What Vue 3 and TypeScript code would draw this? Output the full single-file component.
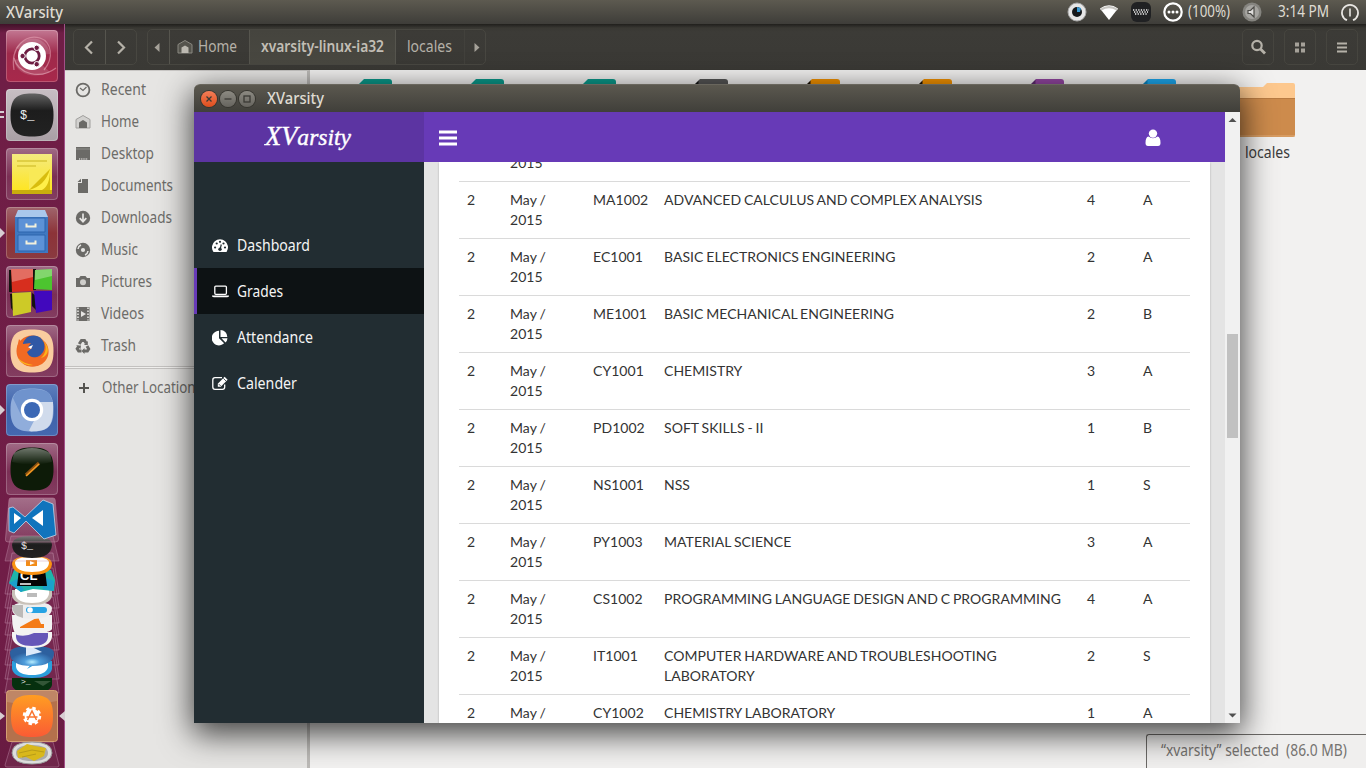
<script setup lang="ts">
import { h } from 'vue'

interface LabelProps { text: string; w: number; size?: number; h?: number; base?: number }

// Single-line label drawn at an exact advance width.
const FitLabel = (p: LabelProps) =>
  h('svg', { width: p.w, height: p.h ?? 20, class: 'fit' }, [
    h('text', { x: 0, y: p.base ?? 15, 'font-size': p.size ?? 15.5, textLength: p.w, lengthAdjust: 'spacingAndGlyphs' }, p.text),
  ])
FitLabel.props = ['text', 'w', 'size', 'h', 'base']

interface Place { label: string; w: number; icon: string }
const places: Place[] = [
  { label: 'Recent', w: 45, icon: '<circle cx="8" cy="8" r="6.4" fill="none" stroke="#6b6a67" stroke-width="1.8"/><path d="M5 6l3 2.5L11.500 5" fill="none" stroke="#6b6a67" stroke-width="1.200"/>' },
  { label: 'Home', w: 38, icon: '<path d="M1 14V5.500L8 1.500l7 4V14z" fill="#d2d1cf" stroke="#a09f9d"/><path d="M4 14V8.500L8 6l4 2.500V14z" fill="#6b6a67"/>' },
  { label: 'Desktop', w: 53, icon: '<path d="M1 1h14v13H1z" fill="#6b6a67"/><path d="M1 3h14" stroke="#8f8e8b"/><path d="M4 13h9" stroke="#d0cfcd" stroke-width="1.500" stroke-dasharray="1.200 1"/>' },
  { label: 'Documents', w: 72, icon: '<path d="M7 1h6v14H3V5h4z" fill="#6b6a67"/><path d="M2.500 4L6 .8V4z" fill="#6b6a67"/>' },
  { label: 'Downloads', w: 71, icon: '<circle cx="8" cy="8" r="7.200" fill="#6b6a67"/><path d="M8 3.500v8M4.700 8.200L8 11.700l3.300-3.500" fill="none" stroke="#e6e5e3" stroke-width="1.700"/>' },
  { label: 'Music', w: 37, icon: '<circle cx="8" cy="8" r="7.200" fill="#6b6a67"/><circle cx="8" cy="8" r="2.100" fill="#e6e5e3"/><path d="M3 7a5 5 0 0 1 3-4M13 9a5 5 0 0 1-3 4" fill="none" stroke="#e6e5e3" stroke-width="1.500"/>' },
  { label: 'Pictures', w: 51, icon: '<path d="M1 4h3l1.500-2h5L12 4h3v9H1z" fill="#6b6a67"/><circle cx="8" cy="8.300" r="3" fill="#cfcecb"/>' },
  { label: 'Videos', w: 43, icon: '<path d="M1.500 1h13v14h-13z" fill="#6b6a67"/><path d="M3 1.500v13M13 1.500v13" stroke="#e6e5e3" stroke-width="1.600" stroke-dasharray="1.500 1.500"/><path d="M6 5l5 3-5 3z" fill="#e6e5e3"/>' },
  { label: 'Trash', w: 35, icon: '<g fill="none" stroke="#6b6a67" stroke-width="3"><path d="M4.200 6l2.300-3.600h3l1.700 2.800"/><path d="M12 8l1.700 3-1.300 2H8.500"/><path d="M6.500 13H3.700l-1.500-2.300L4 8"/></g><path d="M12.800 3v4H9zM9.500 10v6l-3-3zM1 7.500h5L5.500 11z" fill="#6b6a67"/>' },
]

interface NavItem { label: string; w: number; icon: string; active?: boolean }
const nav: NavItem[] = [
  { label: 'Dashboard', w: 73, icon: '<path d="M2.200 15.000A8 8 0 1 1 15.800 15Q15.500 15.500 15 15.500H3Q2.500 15.500 2.200 15z" transform="translate(-1 -1.500)" fill="#fff"/><g fill="#222d32"><circle cx="3.100" cy="9.500" r="1.100"/><circle cx="4.700" cy="5.500" r="1.100"/><circle cx="8" cy="3.800" r="1.100"/><circle cx="11.500" cy="5.500" r="1.100"/><circle cx="13" cy="9.500" r="1.100"/><circle cx="8" cy="11.200" r="1.700"/></g><path d="M8.200 11L9.300 6.500" stroke="#222d32" stroke-width="1.200"/>' },
  { label: 'Grades', w: 46, active: true, icon: '<rect x="2.800" y="2.100" width="11.600" height="8.200" rx="1" fill="none" stroke="#fff" stroke-width="1.300"/><path d="M0 11.500h17v.8q-.5 1-2 1H2q-1.500 0-2-1z" fill="#fff"/>' },
  { label: 'Attendance', w: 76, icon: '<path d="M7 .800V8.200l5.100 5.100A7.300 7.300 0 1 1 7 .8z" fill="#fff"/><path d="M8.500 0a7 7 0 0 1 6.800 7H8.500zM9.500 8.300h6a7 7 0 0 1-2 4.300z" fill="#fff"/>' },
  { label: 'Calender', w: 60, icon: '<path d="M10 1.700H3Q.8 1.700.8 3.900v7.200q0 2.200 2.200 2.200h7.500q2.200 0 2.200-2.200V8.500" fill="none" stroke="#fff" stroke-width="1.300"/><path d="M5.800 10.800V7.700L12.600.8l3 3L8.800 10.800z" fill="#fff"/><path d="M6.800 8.100l2 2M11.300 2.300l2.800 2.800" stroke="#222d32" stroke-width=".8"/>' },
]

interface Grade { code: string; name: string; credit: number; grade: string }
const grades: Grade[] = [
  { code: 'MA1002', name: 'ADVANCED CALCULUS AND COMPLEX ANALYSIS', credit: 4, grade: 'A' },
  { code: 'EC1001', name: 'BASIC ELECTRONICS ENGINEERING', credit: 2, grade: 'A' },
  { code: 'ME1001', name: 'BASIC MECHANICAL ENGINEERING', credit: 2, grade: 'B' },
  { code: 'CY1001', name: 'CHEMISTRY', credit: 3, grade: 'A' },
  { code: 'PD1002', name: 'SOFT SKILLS - II', credit: 1, grade: 'B' },
  { code: 'NS1001', name: 'NSS', credit: 1, grade: 'S' },
  { code: 'PY1003', name: 'MATERIAL SCIENCE', credit: 3, grade: 'A' },
  { code: 'CS1002', name: 'PROGRAMMING LANGUAGE DESIGN AND C PROGRAMMING', credit: 4, grade: 'A' },
  { code: 'IT1001', name: 'COMPUTER HARDWARE AND TROUBLESHOOTING LABORATORY', credit: 2, grade: 'S' },
  { code: 'CY1002', name: 'CHEMISTRY LABORATORY', credit: 1, grade: 'A' },
]

const squircle = 'M26 4.500C42 4.500 47.500 10 47.500 26S42 47.500 26 47.500 4.500 42 4.500 26 10 4.500 26 4.500z'
interface Tile { cls: string; art: string; mark?: string }
const tiles: Tile[] = [
  { cls: 'dash', art: '<g fill="none" stroke="#e9a9ba" stroke-opacity=".55" stroke-width="1.200"><path d="M8 40C4 16 20 4 34 8c12 4 14 20 4 32"/><path d="M50 38C34 50 12 44 8 28"/></g><path d="M10 18C22 2 42 8 44 24L26 26zM8 30c2 14 20 20 36 12L26 26z" fill="#fff" opacity=".15"/><circle cx="26" cy="26" r="14" fill="#fff"/><circle cx="26" cy="26" r="7.200" fill="none" stroke="#6d1c42" stroke-width="2.800"/><g fill="#6d1c42" stroke="#fff" stroke-width="1"><circle cx="16.600" cy="26" r="2.700"/><circle cx="30.700" cy="17.800" r="2.700"/><circle cx="30.700" cy="34.200" r="2.700"/></g>' },
  { cls: 'silver', mark: 'double', art: `<path d="${squircle}" fill="url(#blackGlass)"/><text x="14" y="30" font-family="Liberation Mono" font-size="12" fill="#f2f2f2">$_</text>` },
  { cls: 'glass', art: '<path d="M6 6h40v40H6z" fill="url(#yellow)"/><path d="M6 42h40v4H6z" fill="#c9ae0d"/><path d="M11 13h30M11 18h19" stroke="#d9c637" stroke-width="1.500"/><path d="M23 42V22h20l1-2-6 17z" fill="#f8e956"/><path d="M23 42l21-21v21z" fill="#d8bd0e"/><path d="M23 42Q39 38 44 21Q44 38 36 42z" fill="#ffef49"/>' },
  { cls: 'rust', mark: 'single', art: '<path d="M9 10l3-7h27l3 7z" fill="#a9c8ec"/><path d="M9 10h33v36H9z" fill="#3f78c0"/><path d="M12 11h27v14H12zM12 28h27v16H12z" fill="#5c92d7" stroke="#2c64ad"/><path d="M20.500 16.500v3h9v-3M20.500 33.500v3h9v-3" fill="none" stroke="#f3f1dc" stroke-width="2"/>' },
  { cls: 'glass', art: '<path d="M3 4h4v22H3zM26 3h4v21h-4zM4 28h4v18l-3-4zM26 27l4 3v14l-4-4z" fill="#15120e"/><path d="M5 3h22v22L6 26z" fill="#d72e1e"/><path d="M29 4l17-1v21l-18-1z" fill="#4cc42f"/><path d="M6 27l19-1v20L7 50z" fill="#cdca27"/><path d="M28 25h18v19l-16 3z" fill="#4108bd"/><path d="M5 3h22v8L6 16zM29 4l17-1v7l-17 4z" fill="#fff" opacity=".3"/>' },
  { cls: 'glass', art: `<path d="${squircle}" fill="#f9cc9f"/><circle cx="26" cy="26" r="15.500" fill="#ef6420"/><circle cx="27.500" cy="21.500" r="11" fill="#3158a5"/><path d="M13 14l4 5 8-1-3 4 4 1-5 4c2 6 9 7 14 4 6-4 6-11 3-15 6 5 7 17-2 23-10 6-24 1-25-12 0-5 1-9 2-13z" fill="#f26a23"/><path d="M36 15c6 5 4 14-1 18 8-2 10-11 1-18zM12 33c3 6 10 8 15 7-6-1-11-3-15-7z" fill="#fbb41a"/><path d="M22 22l5-2-2 4z" fill="#fff"/>` },
  { cls: 'blue', mark: 'single', art: `<path d="${squircle}" fill="#90addb"/><path d="M26 18h21C48 44 42 47 25 47.500l-2-1L31 31z" fill="#d0dbec"/><path d="M7 14L10 8C18 4 36 4 43 9l4 9H26L15 31z" fill="#6f93cd"/><circle cx="26" cy="26" r="11.200" fill="#fff"/><circle cx="26" cy="26" r="8" fill="#3c68b5"/>` },
  { cls: 'glass', art: `<path d="${squircle}" fill="#0d1b08"/><path d="M8 10Q26 0 44 10L46 19Q26 24 6 19z" fill="url(#sheen)"/><path d="M20 32L33 20" stroke="#8c5213" stroke-width="3.500"/><path d="M20 33L33 21" stroke="#f39a22" stroke-width="1.500"/>` },
]

const folders = ['teal', 'teal', 'teal', 'gray', 'orange', 'orange', 'purple', 'azure']
</script>

<template>
  <div class="screen">
    <header class="panel">
      <FitLabel class="panel-title" text="XVarsity" :w="57" :size="16" />
      <div class="tray">
        <svg width="20" height="20"><circle cx="10" cy="10" r="9" fill="#e6e6e6" stroke="#aaa" /><circle cx="10" cy="10" r="5" fill="#15181b" /><path d="M10 10V5l4 1-1 4z" fill="#3a99d2" /></svg>
        <svg class="wifi" width="20" height="20"><path d="M1 6.500Q10 0 19 6.500L10 18z" fill="#fff" /><path d="M1 7Q10 1 19 7l-1.500 1.500Q10 4 2.500 8.500z" fill="#c7c6c2" /></svg>
        <svg class="keys" width="20" height="20"><rect width="20" height="20" rx="6" fill="#202123" /><path d="M2 8h16M3 10h14M4 12h12" stroke="#f2f2f2" stroke-width="1.400" stroke-dasharray="1.300 1.300" /></svg>
        <svg class="batt" width="20" height="20"><circle cx="10" cy="10" r="8.700" fill="none" stroke="#fff" stroke-width="2.200" /><g fill="#fff"><circle cx="6" cy="10" r="1.500" /><circle cx="10" cy="10" r="1.500" /><circle cx="14" cy="10" r="1.500" /></g></svg>
        <FitLabel class="pct" text="(100%)" :w="42" />
        <svg class="sound" width="20" height="20"><circle cx="10" cy="10" r="9.500" fill="#85847f" /><circle cx="10" cy="10" r="7" fill="#a6a5a1" /><path d="M6 8.500h2.500L12 5v10l-3.500-3.500H6z" fill="#dedddb" stroke="#4c4b47" stroke-width="1.200" /></svg>
        <FitLabel class="clock" text="3:14 PM" :w="51" />
        <svg class="power" width="18" height="20"><path d="M6 17.200A8 8 0 1 1 12 17.200" fill="none" stroke="#e8e6e2" stroke-width="1.800" /><path d="M9 5.500v8" stroke="#e8e6e2" stroke-width="1.600" /></svg>
      </div>
    </header>

    <div class="desk">
      <aside class="launcher">
        <div v-for="(t, i) in tiles" :key="i" class="slot">
          <i v-if="t.mark" :class="['mark', t.mark]"></i>
          <svg :class="['tile', t.cls]" width="52" height="52" v-html="t.art"></svg>
        </div>
        <svg class="stack" width="65" height="273" viewBox="0 495 65 273">
          <defs>
            <linearGradient id="blackGlass" x2="0" y2="1"><stop stop-color="#646464" /><stop offset=".4" stop-color="#1d1d1d" /><stop offset="1" stop-color="#222" /></linearGradient>
            <linearGradient id="sheen" x2="0" y2="1"><stop stop-color="#fff" stop-opacity=".4" /><stop offset="1" stop-color="#fff" stop-opacity="0" /></linearGradient>
            <linearGradient id="yellow" x2="0" y2="1"><stop stop-color="#f4ea80" /><stop offset="1" stop-color="#ffe51a" /></linearGradient>
            <linearGradient id="flame" x2="0" y2="1"><stop stop-color="#ff9d22" /><stop offset="1" stop-color="#fa5b34" /></linearGradient>
            <radialGradient id="orb" cx=".5" cy=".8"><stop stop-color="#b8eeff" /><stop offset=".35" stop-color="#4e9ddb" /><stop offset="1" stop-color="#2d609f" /></radialGradient>
            <linearGradient id="plate" x2="0" y2="1"><stop stop-color="#fff" stop-opacity=".36" /><stop offset="1" stop-color="#fff" stop-opacity=".12" /></linearGradient>
          </defs>
          <g stroke="#c28caa" stroke-opacity=".45" fill="#fff" fill-opacity=".05">
            <path d="M12 742h41l6 23q0 2-2 2H7q-2 0-2-2zM12 653h41l6 40H5zM12 638h41l6 41H5zM12 624h41l6 41H5zM12 611h41l6 39H5zM12 597h41l6 38H5zM12 583h41l6 40H5zM12 568h41l6 40H5zM12 553h41l6 41H5z" />
          </g>
          <path d="M12 678h40v7q-2 8-20 8t-20-8z" fill="#06300f" /><path d="M34 681l9 5 8-5z" fill="#335637" /><text x="21" y="684" font-family="Liberation Mono" font-size="8" fill="#eee">&gt;_</text>
          <path d="M12 661h40v8q-2 9-20 9t-20-9z" fill="#2c9edb" /><path d="M16 662h32v5q-2 8-16 8t-16-8z" fill="#fff" /><path d="M27 669l7-8h4l-4 4z" fill="#2c9edb" />
          <path d="M10 653q0-7 22-7t22 7q0 13-22 13t-22-13z" fill="url(#orb)" /><path d="M26 644l16 8-16 4z" fill="#ddeafa" />
          <path d="M12 632h40v5q-2 11-20 11t-20-11z" fill="#f4f4f4" /><path d="M16 633h32v4q-1 9-16 9t-16-9z" fill="#6657b8" />
          <path d="M12 615h40v14q-2 4-18 4-8 4-17 2-5-3-5-20z" fill="#f2f2f2" /><path d="M20 627l18-10 3 7h3v4H20z" fill="#f47b17" />
          <path d="M12 608q1-6 20-6t20 6q0 11-20 11t-20-11z" fill="#eee" /><path d="M12 605h11v13q-11-2-11-13z" fill="#bcbab8" /><rect x="26" y="607" width="21" height="6" rx="3" fill="#27a3e4" /><circle cx="30" cy="610" r="2.800" fill="#fff" />
          <path d="M12 590h40v6q-2 9-20 9t-20-9z" fill="#c9c2b9" /><path d="M15 589h34v5q-2 9-17 9t-17-9z" fill="#fff" /><path d="M27 593h10v4H27z" fill="#bbb" />
          <path d="M9 583l5-13h37l4 10-1 11-21-2-12 3z" fill="#1eb5aa" /><path d="M9 583l8-4 7 11-3 2zM41 576l13 5-1 10-10-2z" fill="#1aa1cb" /><path d="M19 570h26l2 16H17z" fill="#050505" /><text x="20" y="580" font-family="Liberation Sans" font-weight="700" font-size="13" fill="#fff">CL</text><path d="M20 584h11" stroke="#fff" stroke-width="1.500" />
          <path d="M12 564q0-8 20-8t20 8q-1 11-20 11t-20-11z" fill="#f99212" /><path d="M15 563q0-6 17-6t17 6q-1 9-17 9t-17-9z" fill="#fff" /><path d="M26 560h11v6H26z" fill="#f38c18" /><path d="M30 561l5 2-5 2z" fill="#fff" />
          <path d="M11 536h42l6 25H5z" fill="#fff" fill-opacity=".12" stroke="#c28caa" stroke-opacity=".4" />
          <path d="M12 545q0-9 20-9t20 9q-1 13-20 13t-20-13z" fill="url(#blackGlass)" /><text x="21" y="549" font-family="Liberation Mono" font-size="10" fill="#eee">$_</text>
          <path d="M11 498h42q2 0 2.200 2l3.300 39q0 3-3 3H8q-3 0-2.500-3L9 500q0-2 2-2z" fill="url(#plate)" stroke="#b77e9b" stroke-opacity=".6" />
          <path d="M9 508l4-1 12 10 18-17 10 4 3 31-12 4-18-18-12 12-5-2z" fill="#1074bd" stroke="#d5e5f2" stroke-width=".7" /><path d="M14 513l7 5-7 6zM32 518l11-8v16z" fill="#fff" />
          <path d="M0 712l5 4-5 4zM65 711l-6 5 6 5z" fill="#d7cdd2" />
          <rect x="6.500" y="690.500" width="51" height="51" rx="3" fill="#b4714c" stroke="#d49f73" /><path d="M7 691h50v10Q32 707 7 702z" fill="#fff" opacity=".15" />
          <path d="M32 695c16 0 21 5 21 21s-5 21-21 21-21-5-21-21 5-21 21-21z" fill="url(#flame)" />
          <circle cx="32" cy="716" r="7.500" fill="#fff" stroke="#fff" stroke-width="3.500" stroke-dasharray="3.200 2.700" /><path d="M27.500 720l4.500-9 4.500 9M26.500 717h11" fill="none" stroke="#fa7530" stroke-width="1.500" />
          <path d="M12 753q0-11 20-11t20 11q-1 11-20 11t-20-11z" fill="#ddd" stroke="#999" /><path d="M16 753q0-8 16-8t16 8-16 8-16-8z" fill="#aaa" /><path d="M17 751l10-7 8 2 11 2-2 8-10 5-8-4-8 1z" fill="#d9b81b" /><path d="M19 753l13-3 12 2M22 757l14-3" stroke="#b89c18" fill="none" />
        </svg>
      </aside>

      <section class="files">
        <div class="toolbar">
          <div class="group pair">
            <span class="cell"><svg width="30" height="34"><path d="M18 11.500l-6 6 6 6" /></svg></span>
            <span class="cell"><svg width="30" height="34"><path d="M12 11.500l6 6-6 6" /></svg></span>
          </div>
          <div class="group path">
            <span class="cell arrow"><svg width="22" height="34"><path class="solid" d="M11.500 13v9l-5-4.500z" /></svg></span>
            <span class="cell home"><svg width="16" height="16"><path d="M1 14V5.500L8 1.500l7 4V14z" fill="#55544d" stroke="#8a8881" stroke-width="1" /><path d="M4.500 14V8.500L8 6.500l3.500 2V14z" fill="#bcb9b1" stroke="none" /></svg><FitLabel text="Home" :w="39" /></span>
            <span class="cell current"><FitLabel text="xvarsity-linux-ia32" :w="123" /></span>
            <span class="cell next"><FitLabel text="locales" :w="45" /></span>
            <span class="cell arrow end"><svg width="22" height="34"><path class="solid" d="M9.500 13v9l5-4.500z" /></svg></span>
          </div>
          <div class="actions">
            <span class="act"><svg width="30" height="34"><circle cx="14" cy="15.500" r="4.700" /><path d="M17.500 19l4.500 4.500" stroke-width="2.800" /></svg></span>
            <span class="act"><svg width="30" height="34"><path class="solid" d="M10 12.500h4v4h-4zM16 12.500h4v4h-4zM10 18.500h4v4h-4zM16 18.500h4v4h-4z" /></svg></span>
            <span class="act"><svg width="30" height="34"><path d="M10 13.500h10M10 17.500h10M10 21.500h10" stroke-width="2" /></svg></span>
          </div>
        </div>
        <div class="files-body">
          <nav class="places">
            <div v-for="p in places" :key="p.label" class="place">
              <svg width="16" height="16" v-html="p.icon"></svg>
              <FitLabel :text="p.label" :w="p.w" />
            </div>
            <div class="place other">
              <svg width="16" height="16"><path d="M8 3v10M3 8h10" stroke="#555450" stroke-width="2" /></svg>
              <FitLabel text="Other Locations" :w="100" />
            </div>
          </nav>
          <div class="icons">
            <div class="folder-row"><i v-for="(c, i) in folders" :key="i" :class="['folder-tab', c]"></i></div>
            <div class="locales">
              <svg width="58" height="56"><path d="M0 4h26l4-4h26q2 0 2 2v20H0z" fill="#fdc88e" /><path d="M0 15h58v37q0 2-2 2H0z" fill="#cd8b4c" /><path d="M0 15.500h58" stroke="#b97b42" /><path d="M0 53h58" stroke="#e2ad79" /></svg>
              <FitLabel text="locales" :w="45" />
            </div>
            <div class="status"><FitLabel :text="'“xvarsity” selected\u00a0 (86.0 MB)'" :w="186" /></div>
          </div>
        </div>
      </section>
    </div>

    <div class="window">
      <div class="titlebar">
        <i class="wb close"><svg width="16" height="16"><path d="M5.500 5.500l5 5M10.500 5.500l-5 5" /></svg></i>
        <i class="wb"><svg width="16" height="16"><path d="M4.500 8h7" /></svg></i>
        <i class="wb"><svg width="16" height="16"><rect x="5" y="5" width="6" height="6" fill="none" /></svg></i>
        <FitLabel class="wtitle" text="XVarsity" :w="57" :size="16" />
      </div>
      <div class="app">
        <div class="app-side">
          <div class="logo">
            <svg width="90" height="40"><text x="1" y="26" textLength="86" lengthAdjust="spacingAndGlyphs"><tspan font-size="27">XV</tspan><tspan font-size="24">arsity</tspan></text></svg>
          </div>
          <div class="menu">
            <div v-for="n in nav" :key="n.label" :class="['item', { active: n.active }]">
              <svg width="18" height="16" v-html="n.icon"></svg>
              <FitLabel :text="n.label" :w="n.w" />
            </div>
          </div>
        </div>
        <div class="app-main">
          <div class="navbar">
            <svg width="18" height="16"><path d="M1.500 2h15M1.500 8h15M1.500 14h15" stroke="#fff" stroke-width="3" stroke-linecap="square" /></svg>
            <svg class="user" width="16" height="18"><path d="M3.500 7.500Q.5 8 .5 14q0 3 2.500 3h10q2.500 0 2.500-3 0-6-3-6.500Q8 11 3.500 7.500z" fill="#fff" /><circle cx="8" cy="4.600" r="4.200" fill="#fff" /></svg>
          </div>
          <div class="content">
            <div class="box">
              <table>
                <colgroup><col class="c1" /><col class="c2" /><col class="c3" /><col class="c4" /><col class="c5" /><col class="c6" /></colgroup>
                <tbody>
                  <tr class="tail"><td></td><td>2015</td><td></td><td></td><td></td><td></td></tr>
                  <tr v-for="g in grades" :key="g.code">
                    <td>2</td><td>May /<br />2015</td><td>{{ g.code }}</td><td>{{ g.name }}</td><td>{{ g.credit }}</td><td>{{ g.grade }}</td>
                  </tr>
                </tbody>
              </table>
            </div>
          </div>
        </div>
        <div class="scrollbar">
          <svg width="15" height="15"><path d="M3.500 10h8l-4-4z" fill="#505050" /></svg>
          <i class="thumb"></i>
          <svg width="15" height="15"><path d="M3.500 5.500h8l-4 4z" fill="#505050" /></svg>
        </div>
      </div>
    </div>
  </div>
</template>

<style>
body { overflow: hidden; }
</style>

<style scoped>
* { box-sizing: border-box; }
.screen { position: relative; width: 1366px; height: 768px; overflow: hidden; display: flex; flex-direction: column; font-family: "Noto Sans", "Open Sans", sans-serif; background: #f2f1f0; }
svg { display: block; flex: none; }
.fit { fill: currentColor; overflow: visible; white-space: pre; }
.panel { height: 24px; flex: none; display: flex; align-items: center; justify-content: space-between; padding: 0 7px 0 6px; background: linear-gradient(#5d5a50, #3e3d39); color: #dfdbd2; }
.panel-title { font-weight: 500; margin-top: 2px; }
.tray { display: flex; align-items: center; }
.wifi { margin-left: 12px; }
.keys { margin-left: 12px; }
.batt { margin-left: 12px; }
.pct { margin-left: 5px; }
.sound { margin-left: 12px; }
.clock { margin-left: 16px; }
.power { margin-left: 12px; margin-top: 2px; }
.desk { flex: 1; display: flex; min-height: 0; }
.launcher { width: 65px; flex: none; display: flex; flex-direction: column; padding-top: 6px; background: linear-gradient(#411229, #6f1e46 9px, #701d47 80%, #681b41); border-right: 1px solid #a25088; }
.slot { height: 59px; padding-left: 6px; flex: none; position: relative; }
.tile { border-radius: 4px; outline: 1px solid rgba(255, 255, 255, 0.22); outline-offset: -1px; }
.glass { background: linear-gradient(rgba(255, 255, 255, 0.34), rgba(255, 255, 255, 0.08) 55%, rgba(255, 255, 255, 0.14)); }
.dash { background: linear-gradient(#c37893, #9e2a4b 45%, #a8284b); }
.silver { background: linear-gradient(#c8bfc4, #a99fa5); }
.rust { background: linear-gradient(#a0656d, #8c3338 50%, #8a3a40); }
.blue { background: linear-gradient(#5f80bd, #3d62aa 50%, #4568b0); }
.mark { position: absolute; left: 0; top: 21px; border: 5px solid transparent; border-left-color: #d7cdd2; border-right: 0; }
.mark.double { top: 22px; width: 4px; height: 7px; border: solid #d7cdd2; border-width: 2px 0; }
.stack { margin-top: -7px; }
.files { flex: 1; min-width: 0; display: flex; flex-direction: column; }
.toolbar { height: 46px; flex: none; display: flex; align-items: flex-start; padding: 5px 8px 0; background: linear-gradient(#201f1c, #393833 4px, #3c3b37 8px, #3a3935); color: #b5b1a8; }
.toolbar svg { fill: none; stroke: #b5b1a8; stroke-width: 2.200; }
.toolbar .fit { fill: currentColor; stroke: none; }
.toolbar .solid { fill: #a5a199; stroke: none; }
.group { display: flex; height: 36px; border: 1px solid #484741; border-radius: 5px; overflow: hidden; }
.pair { width: 64px; }
.path { margin-left: 10px; width: 339px; border-right: 1px solid #484741; }
.cell { display: flex; align-items: center; height: 34px; }
.pair .cell { width: 31px; }
.pair .cell + .cell { width: 32px; border-left: 1px solid #56554e; }
.arrow { width: 21px; }
.home { width: 80px; padding-left: 7px; gap: 5px; border-left: 1px solid #56554e; }
.current { width: 147px; padding-left: 11px; background: linear-gradient(#45443e, #494841); border-left: 1px solid #56554e; border-right: 1px solid #56554e; font-weight: 600; color: #c2beb5; }
.next { padding-left: 11px; width: 68px; }
.arrow.end { border-left: 1px solid #42413c; }
.actions { margin-left: auto; display: flex; gap: 10px; }
.act { width: 32px; height: 36px; border: 1px solid #46453f; border-radius: 5px; }
.files-body { flex: 1; display: flex; min-height: 0; }
.places { width: 245px; flex: none; padding-top: 3px; background: #e6e5e3; border-right: 3px solid #bcbab7; border-top: 1px solid #c8c6c4; color: #6d6c69; }
.place { height: 32px; display: flex; align-items: center; padding-left: 10px; gap: 10px; }
.other { margin-top: 4px; height: 43px; padding-left: 11px; border-top: 1px solid #c3c1bf; box-shadow: inset 0 1px #f0efed, inset 0 2px #c3c1bf; }
.icons { flex: 1; position: relative; background: #f2f1f0; }
.folder-row { display: flex; gap: 78px; padding: 9px 0 0 48px; }
.folder-tab { width: 34px; height: 12px; border-radius: 0 3px 0 0; background: #0b9a8b; clip-path: polygon(6px 0, 100% 0, 100% 100%, 0 100%, 0 6px); }
.folder-tab.gray { background: linear-gradient(90deg, #161616 4px, #555 5px); }
.folder-tab.orange { background: linear-gradient(90deg, #1c1204 4px, #f59300 5px); }
.folder-tab.purple { background: linear-gradient(90deg, #5e2b6f 5px, #9447a3 6px); }
.folder-tab.azure { background: linear-gradient(90deg, #0a86c2 5px, #1ca9f0 6px); }
.locales { position: absolute; left: 927px; top: 13px; color: #3c3c3c; }
.locales .fit { margin: 4px 0 0 8px; }
.status { position: absolute; right: 0; bottom: 0; width: 220px; height: 34px; padding: 6px 0 0 14px; border: solid #6b6966; border-width: 1px 0 0 1px; border-radius: 3px 0 0; background: #f0efee; color: #757370; }
.window { position: absolute; left: 194px; top: 84px; width: 1046px; height: 639px; border-radius: 6px 6px 0 0; box-shadow: 0 9px 32px 2px rgba(0, 0, 0, 0.73); }
.titlebar { height: 28px; display: flex; align-items: center; padding-left: 7px; gap: 3px; border-radius: 6px 6px 0 0; border-top: 1px solid #69665d; background: linear-gradient(#5b584f, #403f3a); color: #dfdbd2; }
.wb { width: 16px; height: 16px; border-radius: 50%; background: linear-gradient(#8c8a82, #66645e); box-shadow: 0 0 0 1px #36352f; }
.wb svg { stroke: #3b3a35; stroke-width: 1.300; }
.close { background: linear-gradient(#f37d57, #df4e1d); }
.wtitle { margin-left: 9px; font-weight: 500; }
.app { height: 611px; display: flex; background: #e4e4e4; }
.app-side { width: 230px; background: #222d32; }
.logo { height: 50px; background: #5c34a2; padding: 7px 0 0 70px; color: #fff; font-family: "Liberation Serif", serif; font-style: italic; }
.logo svg { fill: #fff; stroke: #fff; stroke-width: 0.4; }
.menu { padding-top: 60px; }
.item { height: 46px; display: flex; align-items: center; gap: 7px; padding: 2px 0 0 18px; color: #f4f4f4; }
.active { background: #0d1214; border-left: 3px solid #673ab7; padding-left: 15px; }
.app-main { width: 801px; display: flex; flex-direction: column; }
.navbar { height: 50px; flex: none; display: flex; align-items: center; justify-content: space-between; padding: 1px 64px 0 15px; background: #673ab7; }
.content { height: 561px; overflow: hidden; padding: 0 15px; background: #e4e4e4; }
.box { height: 561px; overflow: hidden; background: #fff; padding: 0 20px; box-shadow: 0 1px 2px rgba(0, 0, 0, 0.25); }
table { margin-top: -17px; width: 731px; table-layout: fixed; border-collapse: separate; border-spacing: 0; font: 14px/20px Lato, sans-serif; letter-spacing: 0.04px; word-spacing: -0.8px; color: #333; }
td { padding: 8px; vertical-align: top; border-top: 1px solid #dadada; height: 57px; }
.tail td { height: 36px; padding-top: 7px; }
.c1 { width: 43px; }
.c2 { width: 83px; }
.c3 { width: 71px; }
.c4 { width: 423px; }
.c5 { width: 56px; }
.c6 { width: 55px; }
td:nth-child(3) { white-space: nowrap; }
.scrollbar { width: 15px; display: flex; flex-direction: column; justify-content: space-between; background: #f1f1f1; }
.thumb { width: 11px; height: 104px; margin: 207px 2px auto; background: #c1c1c1; }
</style>
